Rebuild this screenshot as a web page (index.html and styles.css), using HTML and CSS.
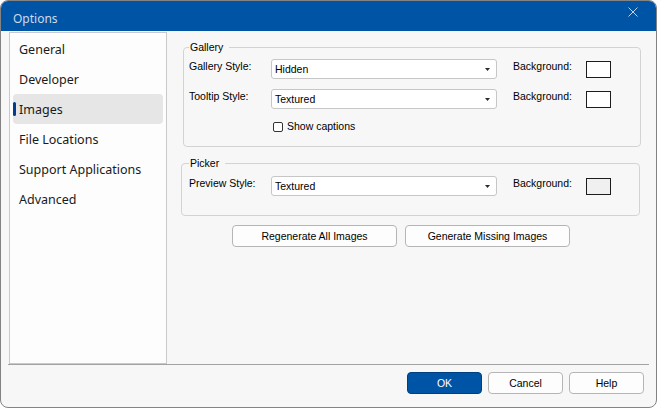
FILE: index.html
```html
<!DOCTYPE html>
<html lang="en">
<head>
<meta charset="utf-8">
<title>Options</title>
<link rel="stylesheet" href="styles.css">
</head>
<body>
<div class="window">
  <div class="titlebar">
    <span class="title">Options</span>
    <svg class="close" width="10" height="10" viewBox="0 0 10 10"><path d="M0.5 0.5L9.5 9.5M9.5 0.5L0.5 9.5" stroke="#c3d1e3" stroke-width="1" fill="none"/></svg>
  </div>
  <div class="main">
    <nav class="nav">
      <div class="nav-item">General</div>
      <div class="nav-item">Developer</div>
      <div class="nav-item active">Images</div>
      <div class="nav-item">File Locations</div>
      <div class="nav-item">Support Applications</div>
      <div class="nav-item">Advanced</div>
    </nav>
    <div class="content">
      <fieldset class="group gallery">
        <legend>Gallery</legend>
        <div class="grid grid-gallery">
          <span class="lbl">Gallery Style:</span>
          <div class="combo"><span>Hidden</span><svg class="arrow" width="5" height="3" viewBox="0 0 5 3"><path d="M0 0H5L2.5 3Z" fill="#2b2b2b"/></svg></div>
          <span class="lbl bg">Background:</span>
          <div class="swatch"></div>
          <span class="lbl">Tooltip Style:</span>
          <div class="combo"><span>Textured</span><svg class="arrow" width="5" height="3" viewBox="0 0 5 3"><path d="M0 0H5L2.5 3Z" fill="#2b2b2b"/></svg></div>
          <span class="lbl bg">Background:</span>
          <div class="swatch"></div>
          <label class="check"><input type="checkbox"><span>Show captions</span></label>
        </div>
      </fieldset>
      <fieldset class="group picker">
        <legend>Picker</legend>
        <div class="grid">
          <span class="lbl">Preview Style:</span>
          <div class="combo"><span>Textured</span><svg class="arrow" width="5" height="3" viewBox="0 0 5 3"><path d="M0 0H5L2.5 3Z" fill="#2b2b2b"/></svg></div>
          <span class="lbl bg">Background:</span>
          <div class="swatch gray"></div>
        </div>
      </fieldset>
      <div class="actions">
        <button class="btn wide">Regenerate All Images</button>
        <button class="btn wide">Generate Missing Images</button>
      </div>
    </div>
  </div>
  <div class="footer">
    <button class="btn primary">OK</button>
    <button class="btn">Cancel</button>
    <button class="btn">Help</button>
  </div>
</div>
</body>
</html>
```
FILE: styles.css
```css
html, body {
  margin: 0;
  padding: 0;
  background: #ffffff;
}

body {
  font-family: "Liberation Sans", Arial, sans-serif;
}

.window {
  box-sizing: border-box;
  width: 657px;
  height: 408px;
  border: 1px solid #838383;
  border-radius: 8px;
  overflow: hidden;
  background: #f7f7f7;
  display: flex;
  flex-direction: column;
}

.titlebar {
  flex: none;
  height: 30px;
  background: #0054a6;
  display: flex;
  align-items: flex-start;
}

.title {
  font-family: "Noto Sans", sans-serif;
  font-size: 12px;
  line-height: 16px;
  margin: 10px 0 0 12px;
  color: #cfdae8;
}

.close {
  display: block;
  margin: 6px 18px 0 auto;
}

.main {
  flex: none;
  height: 333px;
  display: flex;
}

.nav {
  box-sizing: border-box;
  flex: none;
  width: 158px;
  height: 332px;
  margin: 1px 0 0 8px;
  padding: 1px 3px 0 3px;
  background: #fdfdfd;
  border: 1px solid #c9c9c9;
  font-family: "Noto Sans", sans-serif;
  font-size: 12.5px;
  color: #1a1a1a;
}

.nav-item {
  position: relative;
  box-sizing: border-box;
  height: 30px;
  line-height: 30px;
  padding: 1px 0 0 6px;
  border-radius: 4px;
  white-space: nowrap;
}

.nav-item.active {
  background: #e6e6e6;
}

.nav-item.active::before {
  content: "";
  position: absolute;
  left: 0;
  top: 8px;
  width: 3px;
  height: 14px;
  border-radius: 2px;
  background: #003d8c;
}

.content {
  flex: 1;
  min-width: 0;
}

.group {
  box-sizing: border-box;
  min-width: 0;
  border: 1px solid #d3d3d3;
  border-radius: 4px;
}

.gallery {
  margin: 9px 15px 0 16px;
  padding: 4px 5px 12px 5px;
}

.picker {
  margin: 9px 16px 0 14px;
  padding: 5px 7px 19px 7px;
}

legend {
  padding: 0 6px 0 1px;
  font-size: 10.5px;
  line-height: 15px;
  color: #000;
}

.grid {
  display: grid;
  grid-template-columns: 82px 226px 89px 25px;
  grid-template-rows: 20px;
  row-gap: 10px;
  font-size: 10.5px;
  color: #000;
}

.grid-gallery {
  grid-template-rows: 20px 20px 15px;
}

.lbl {
  align-self: start;
  padding-top: 1px;
  line-height: 13px;
  white-space: nowrap;
}

.bg {
  padding-left: 16px;
}

.combo {
  box-sizing: border-box;
  display: flex;
  align-items: center;
  padding: 1px 6px 0 3px;
  border: 1px solid #c6c6c6;
  border-radius: 3px;
  background: #ffffff;
  line-height: 13px;
}

.combo span {
  flex: 1;
}

.arrow {
  display: block;
}

.swatch {
  box-sizing: border-box;
  align-self: center;
  width: 25px;
  height: 17px;
  border: 1px solid #1c1c1c;
  background: #ffffff;
}

.swatch.gray {
  background: #f0f0f0;
}

.check {
  grid-column: 2 / -1;
  display: flex;
  align-items: center;
  gap: 4px;
  padding-left: 2px;
  line-height: 13px;
}

.check input {
  appearance: none;
  -webkit-appearance: none;
  box-sizing: border-box;
  margin: 0;
  width: 10px;
  height: 10px;
  border: 1px solid #333333;
  border-radius: 2px;
  background: #ffffff;
}

.actions {
  display: flex;
  gap: 8px;
  margin: 9px 0 0 65px;
}

.btn {
  box-sizing: border-box;
  height: 22px;
  width: 75px;
  padding: 0;
  border: 1px solid #b5b5b5;
  border-radius: 4px;
  background: #fdfdfd;
  font-family: "Liberation Sans", Arial, sans-serif;
  font-size: 10.5px;
  color: #000;
}

.btn.wide {
  width: 165px;
}

.btn.primary {
  background: #0054a6;
  border-color: #003f80;
  color: #ffffff;
}

.footer {
  flex: none;
  margin: 0 7px;
  padding: 7px 5px 0 0;
  border-top: 1px solid #a3a3a3;
  display: flex;
  justify-content: flex-end;
  gap: 6px;
}
```
